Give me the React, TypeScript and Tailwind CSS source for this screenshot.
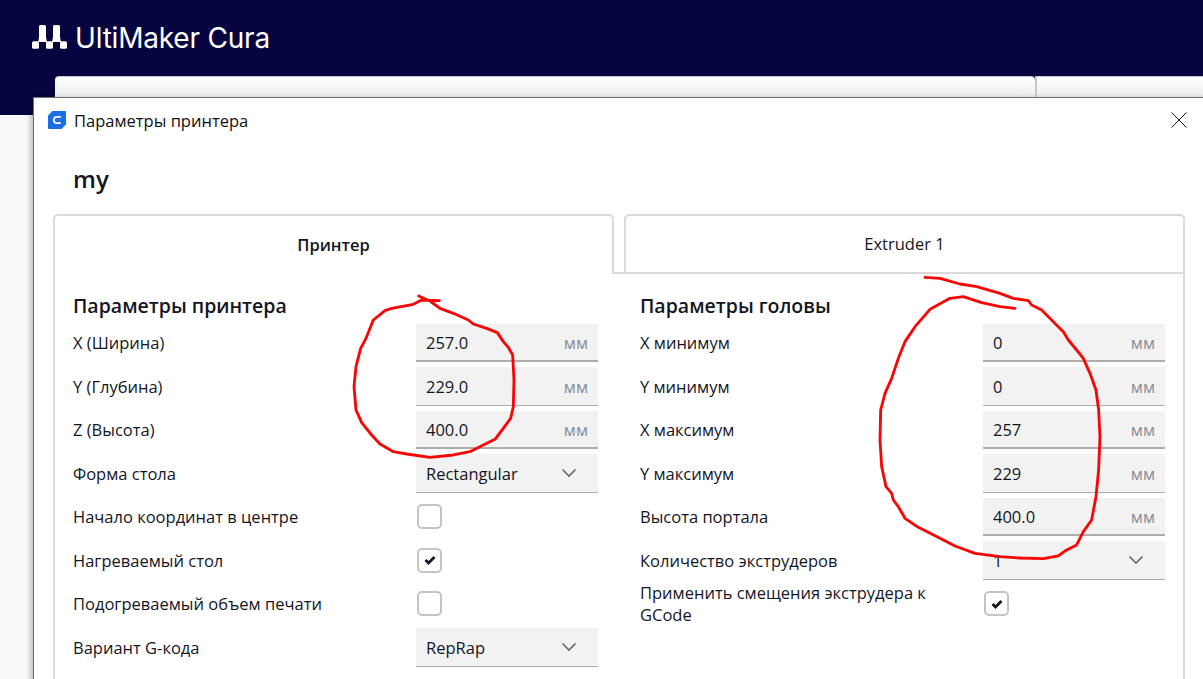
const font = "font-['Open_Sans','Noto_Sans',sans-serif]";

function Unit() {
  return <span className="text-[16.5px] text-[#8a8d96]">мм</span>;
}

function Chevron() {
  return (
    <svg width="16" height="10" viewBox="0 0 16 10" fill="none" className="shrink-0">
      <path d="M1.5 1.5 L8 8 L14.5 1.5" stroke="#666666" strokeWidth="1.6" />
    </svg>
  );
}

function Field({ value, heavy }: { value: string; heavy?: boolean }) {
  return (
    <div
      className={`h-[38.5px] w-[182px] bg-[#f2f2f2] flex items-center justify-between pl-[10px] pr-[10px] pt-[4px] border-b-[#adadad] ${heavy ? "border-b-2" : "border-b"}`}
    >
      <span className="text-[16.5px] text-[#14161f]">{value}</span>
      <Unit />
    </div>
  );
}

function Select({ value }: { value: string }) {
  return (
    <div className="h-[38.5px] w-[182px] bg-[#f2f2f2] flex items-center justify-between pl-[10px] pr-[21px] border-b border-b-[#adadad]">
      <span className="text-[16.5px] text-[#14161f] mt-[3px]">{value}</span>
      <Chevron />
    </div>
  );
}

function Check({ on }: { on?: boolean }) {
  return (
    <div className="w-[25px] h-[25px] ml-px rounded-[5px] border-2 border-[#c4c4c4] bg-white flex items-center justify-center">
      {on && (
        <svg width="12" height="10" viewBox="0 0 12 10">
          <path d="M1.5 5 L4.5 8 L10.5 2" stroke="#14161f" strokeWidth="2.8" fill="none" />
        </svg>
      )}
    </div>
  );
}

function Row({ label, children }: { label: string; children: React.ReactNode }) {
  return (
    <div className="h-[43.5px] flex items-center justify-between">
      <span className="text-[16.5px] leading-[22px] text-[#14161f] w-[300px] pt-px">{label}</span>
      {children}
    </div>
  );
}

const scribbleOne =
  "M236 78 L270 93 L300 115 L340 130 L385 150 L400 162 L440 175 L472 188 L490 215 L505 232 L518 255 L522 330 L520 410 L512 445 L490 475 L465 508 L430 525 L390 545 L340 555 L270 562 L200 552 L160 545 L120 522 L95 495 L65 458 L48 420 L42 350 L48 290 L62 235 L78 205 L100 150 L135 122 L155 115 L220 103 L245 90 L298 92";
const scribbleTwo =
  "M195 22 L240 25 L300 42 L350 50 L420 70 L460 85 L505 92 L515 105 L545 120 L580 155 L610 185 L625 210 L650 240 L670 265 L690 310 L708 360 L716 420 L720 500 L716 600 L708 680 L695 750 L670 785 L650 825 L620 840 L595 858 L550 866 L480 864 L420 860 L345 850 L285 828 L240 805 L175 772 L135 745 L115 710 L100 690 L95 670 L78 650 L65 590 L60 510 L62 420 L75 370 L95 325 L115 265 L135 215 L165 170 L210 118 L270 85 L310 80 L365 98 L420 110 L465 115";

export default function App() {
  return (
    <div className={`relative w-[1203px] h-[679px] overflow-hidden bg-[#fafafa] ${font}`}>
      <header className="h-[115px] bg-[#070540] pt-[25px] pl-[32px]">
        <div className="flex items-center gap-[8px] h-[24px]">
          <svg width="35" height="24" viewBox="0 0 35 24" fill="white">
            <path d="M8.5 0 H12.5 Q14 0 14 1.5 V12 L15 17 H6.2 L7 12 V1.5 Q7 0 8.5 0 Z" />
            <path d="M22.5 0 H26.5 Q28 0 28 1.5 V12 L29 17 H20 L21 12 V1.5 Q21 0 22.5 0 Z" />
            <rect x="0" y="16.3" width="7" height="7.5" rx="1.6" />
            <rect x="14" y="16.3" width="7" height="7.5" rx="1.6" />
            <rect x="28" y="16.3" width="7" height="7.5" rx="1.6" />
          </svg>
          <span className="font-['Inter',sans-serif] text-[28px] leading-[26px] text-white tracking-[-0.2px] mt-[2px]">
            UltiMaker Cura
          </span>
        </div>
      </header>

      <div className="absolute left-[55px] top-[76px] w-[980px] h-[30px] rounded-t-[4px] bg-gradient-to-b from-white to-[#e6e6e6] border-t border-[#c8c8c8]" />
      <div className="absolute left-[1035px] top-[76px] w-[168px] h-[30px] bg-gradient-to-b from-white to-[#e6e6e6] border-l-2 border-t border-[#c8c8c8]" />

      <section className="absolute left-[33px] top-[97px] w-[1200px] h-[640px] bg-white border border-[#707070] shadow-[-2px_2px_6px_rgba(0,0,0,0.3)]">
        <div className="h-[46px] flex items-center pl-[14px] font-['Open_Sans',sans-serif]">
          <svg width="18" height="18" viewBox="0 0 18 18" className="mr-[8px] -mt-[2px]">
            <path d="M4.5 0 H17 Q18 0 18 1 V13.5 L13.5 18 H1 Q0 18 0 17 V4.5 Z" fill="#1a6fe8" />
            <path d="M12.8 5.8 H8.8 Q5.8 5.8 5.8 9 Q5.8 12.2 8.8 12.2 H12.8" stroke="white" strokeWidth="1.7" fill="none" />
          </svg>
          <span className="text-[16.5px] text-[#111111]">Параметры принтера</span>
        </div>

        <h1 className="mt-[20px] ml-[39px] text-[24px] leading-[30px] font-semibold text-[#14161f]">my</h1>

        <div className="mt-[20px] ml-[19px] w-[1132px]">
          <div className="flex h-[60px] items-stretch">
            <div className="w-[561px] rounded-t-[5px] border-2 border-b-0 border-[#dadada] bg-white flex items-center justify-center text-[16.5px] font-semibold text-[#14161f]">
              Принтер
            </div>
            <div className="w-[10px] border-b-2 border-[#dadada]" />
            <div className="w-[561px] rounded-t-[5px] border-2 border-[#dadada] bg-white flex items-center justify-center text-[16.5px] text-[#14161f]">
              Extruder 1
            </div>
          </div>
          <div className="border-r-2 border-l-2 border-[#dadada] h-[440px] pt-[18px] pl-[18px] pr-[18px] flex gap-[42px]">
            <div className="w-[525px]">
              <h2 className="text-[19.5px] leading-[28px] font-semibold text-[#14161f] mb-[1px]">Параметры принтера</h2>
              <Row label="X (Ширина)"><Field value="257.0" heavy /></Row>
              <Row label="Y (Глубина)"><Field value="229.0" /></Row>
              <Row label="Z (Высота)"><Field value="400.0" heavy /></Row>
              <Row label="Форма стола"><Select value="Rectangular" /></Row>
              <Row label="Начало координат в центре"><div className="w-[182px]"><Check /></div></Row>
              <Row label="Нагреваемый стол"><div className="w-[182px]"><Check on /></div></Row>
              <Row label="Подогреваемый объем печати"><div className="w-[182px]"><Check /></div></Row>
              <Row label="Вариант G-кода"><Select value="RepRap" /></Row>
            </div>
            <div className="w-[525px]">
              <h2 className="text-[19.5px] leading-[28px] font-semibold text-[#14161f] mb-[1px]">Параметры головы</h2>
              <Row label="X минимум"><Field value="0" heavy /></Row>
              <Row label="Y минимум"><Field value="0" /></Row>
              <Row label="X максимум"><Field value="257" heavy /></Row>
              <Row label="Y максимум"><Field value="229" /></Row>
              <Row label="Высота портала"><Field value="400.0" heavy /></Row>
              <Row label="Количество экструдеров"><Select value="1" /></Row>
              <Row label="Применить смещения экструдера к GCode"><div className="w-[182px]"><Check on /></div></Row>
            </div>
          </div>
        </div>

        <button className="absolute left-[1137px] top-[14px] w-[16px] h-[16px]" aria-label="Закрыть">
          <svg width="16" height="16" viewBox="0 0 16 16">
            <path d="M0.5 0.5 L15.5 15.5 M15.5 0.5 L0.5 15.5" stroke="#111111" strokeWidth="1" />
          </svg>
        </button>
      </section>

      <svg className="absolute left-0 top-0 pointer-events-none" width="1203" height="679" viewBox="0 0 1203 679" fill="none">
        <g transform="translate(340 270) scale(0.3333)" stroke="#fa0505" strokeWidth="8.5" strokeLinejoin="round" strokeLinecap="round">
          <path d={scribbleOne} />
        </g>
        <g transform="translate(860 270) scale(0.3333)" stroke="#fa0505" strokeWidth="8.5" strokeLinejoin="round" strokeLinecap="round">
          <path d={scribbleTwo} />
        </g>
      </svg>
    </div>
  );
}
